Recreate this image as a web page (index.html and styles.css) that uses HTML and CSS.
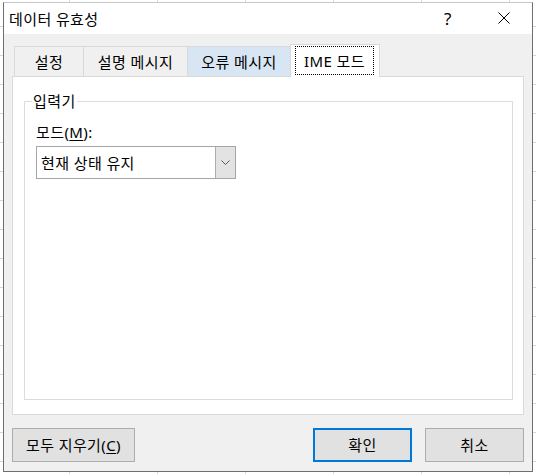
FILE: index.html
```html
<!DOCTYPE html>
<html lang="ko">
<head>
    <meta charset="UTF-8">
    <meta name="viewport" content="width=device-width, initial-scale=1.0">
    <title>데이터 유효성</title>
    <link rel="stylesheet" href="styles.css">
</head>
<body>
    <!-- 대화상자 -->
    <div class="dialog">
        <!-- 제목 표시줄 -->
        <div class="titlebar">
            <span class="title">데이터 유효성</span>
            <span class="help">?</span>
            <svg class="close" width="12" height="12" viewBox="0 0 12 12">
                <path d="M0.5 0.5 L11.5 11.5 M11.5 0.5 L0.5 11.5" stroke="#000" stroke-width="1" fill="none"/>
            </svg>
        </div>
        <div class="content">
            <!-- 탭 -->
            <div class="tabs">
                <div class="tab t1">설정</div>
                <div class="tab t2">설명 메시지</div>
                <div class="tab t3 hover">오류 메시지</div>
                <div class="tab t4 active"><span class="focus">IME 모드</span></div>
            </div>
            <!-- 탭 내용 -->
            <div class="panel">
                <fieldset class="group">
                    <legend>입력기</legend>
                    <div class="label">모드(<u>M</u>):</div>
                    <div class="combo">
                        <div class="combo-value">현재 상태 유지</div>
                        <div class="combo-btn">
                            <svg width="9" height="5" viewBox="0 0 9 5">
                                <polyline points="0.5,0.5 4.5,4.5 8.5,0.5" stroke="#5a5a5a" stroke-width="1" fill="none"/>
                            </svg>
                        </div>
                    </div>
                </fieldset>
            </div>
            <!-- 버튼 -->
            <div class="buttons">
                <div class="btn clear">모두 지우기(<u>C</u>)</div>
                <div class="btn ok">확인</div>
                <div class="btn cancel">취소</div>
            </div>
        </div>
    </div>
</body>
</html>
```
FILE: styles.css
```css
html,body{
    margin: 0;
    padding: 0;
}
body{
    width: 536px;
    height: 474px;
    overflow: hidden;
    background-color: #fff;
    background-image:
        linear-gradient(90deg, #d6d6d6 1px, transparent 1px),
        linear-gradient(#d6d6d6 1px, transparent 1px);
    background-size: 88px 29px, 88px 29px;
    background-position: 69px 0, 0 26px;
    font-family: "Noto Sans", "Noto Sans CJK KR", sans-serif;
    font-size: 15px;
    letter-spacing: 0.4px;
    color: #000;
}
.dialog{
    box-sizing: border-box;
    width: 530px;
    height: 470px;
    margin: 2px 0 0 3px;
    border: 1px solid #6e6e6e;
    border-top-color: #c8c8c8;
    background-color: #f0f0f0;
    display: flex;
    flex-direction: column;
}
.titlebar{
    height: 31px;
    background-color: #fff;
    display: flex;
    align-items: center;
    padding-left: 5px;
}
.title{
    flex: 1;
    line-height: 20px;
}
.help{
    width: 16px;
    text-align: center;
    font-size: 17px;
    line-height: 20px;
    margin-right: 42px;
}
.close{
    display: block;
    margin-right: 22px;
    margin-top: -1px;
}
.content{
    flex: 1;
    padding: 0 8px 9px;
    display: flex;
    flex-direction: column;
}
.tabs{
    display: flex;
    align-items: flex-end;
    height: 32px;
    margin: 10px 0 0 2px;
}
.tab{
    box-sizing: border-box;
    height: 30px;
    border: 1px solid #d9d9d9;
    border-bottom: 0;
    margin-left: -1px;
    display: flex;
    align-items: center;
    justify-content: center;
    line-height: 20px;
    background-color: #f0f0f0;
}
.t1{
    width: 70px;
    margin-left: 0;
}
.t2{
    width: 105px;
}
.t3{
    width: 104px;
}
.hover{
    background-color: #d8e6f4;
}
.active{
    position: relative;
    z-index: 1;
    width: 90px;
    height: 33px;
    margin-bottom: -1px;
    padding: 1px 5px 1px 4px;
    background-color: #fff;
    align-items: stretch;
}
.focus{
    flex: 1;
    height: 29px;
    border: 1px dotted #000;
    box-sizing: border-box;
    display: flex;
    align-items: center;
    justify-content: center;
}
.panel{
    box-sizing: border-box;
    height: 339px;
    border: 1px solid #d9d9d9;
    background-color: #fff;
    display: flex;
    flex-direction: column;
}
.group{
    flex: 1;
    margin: 14px 10px 14px 11px;
    padding: 0 11px;
    border: 1px solid #dcdcdc;
    min-width: 0;
}
.group legend{
    margin-left: -4px;
    padding: 0 1px;
    line-height: 21px;
}
.label{
    margin-top: 10px;
    line-height: 20px;
}
.label u, .btn u{
    text-underline-offset: 2px;
}
.combo{
    box-sizing: border-box;
    width: 200px;
    height: 33px;
    margin-top: 4px;
    border: 1px solid #a6a6a6;
    display: flex;
}
.combo-value{
    flex: 1;
    padding-left: 4px;
    display: flex;
    align-items: center;
    line-height: 20px;
}
.combo-btn{
    width: 19px;
    background-color: #e3e3e3;
    border-left: 1px solid #adadad;
    display: flex;
    align-items: center;
    justify-content: center;
}
.combo-btn svg{
    display: block;
}
.buttons{
    display: flex;
    margin-top: 13px;
    height: 34px;
}
.btn{
    box-sizing: border-box;
    height: 34px;
    border: 1px solid #adadad;
    background-color: #e1e1e1;
    display: flex;
    align-items: center;
    justify-content: center;
    line-height: 20px;
}
.clear{
    width: 123px;
    margin-right: auto;
}
.ok{
    width: 99px;
    border: 2px solid #0078d7;
    margin-right: 13px;
}
.cancel{
    width: 99px;
}
```
